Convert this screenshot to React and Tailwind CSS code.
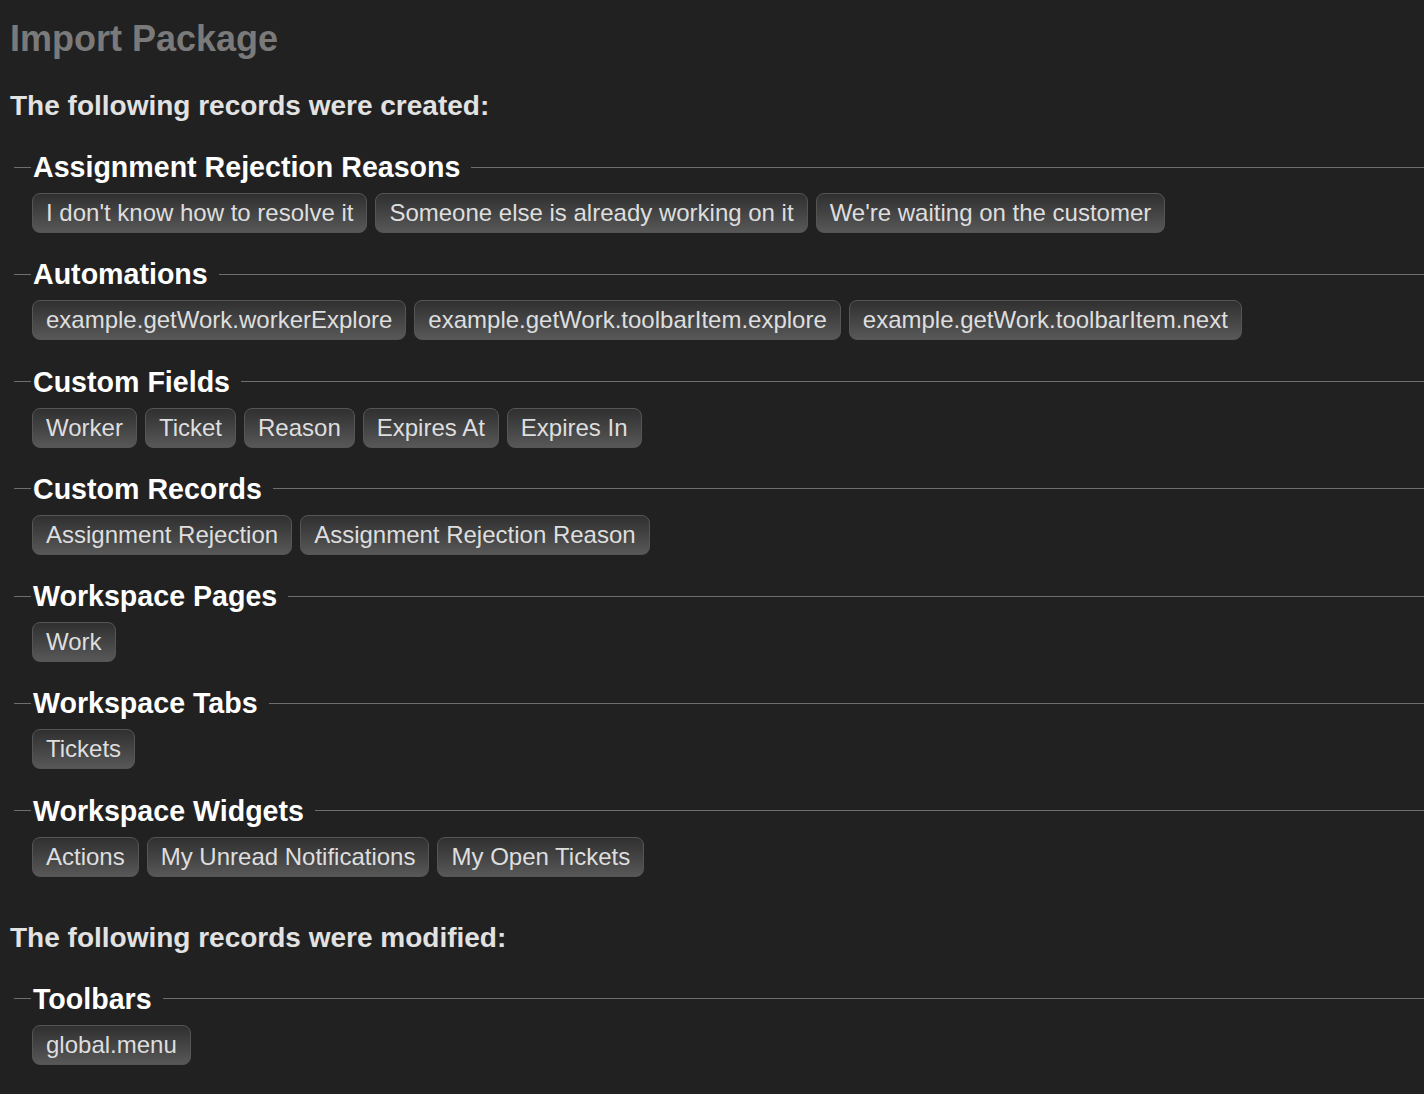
import React from "react";

const created = [
  { title: "Assignment Rejection Reasons", items: ["I don't know how to resolve it", "Someone else is already working on it", "We're waiting on the customer"] },
  { title: "Automations", items: ["example.getWork.workerExplore", "example.getWork.toolbarItem.explore", "example.getWork.toolbarItem.next"] },
  { title: "Custom Fields", items: ["Worker", "Ticket", "Reason", "Expires At", "Expires In"] },
  { title: "Custom Records", items: ["Assignment Rejection", "Assignment Rejection Reason"] },
  { title: "Workspace Pages", items: ["Work"] },
  { title: "Workspace Tabs", items: ["Tickets"] },
  { title: "Workspace Widgets", items: ["Actions", "My Unread Notifications", "My Open Tickets"] },
];

const modified = [{ title: "Toolbars", items: ["global.menu"] }];

function Section({ title, items, last }) {
  return (
    <div className={last ? "" : "mb-[27.3px]"}>
      <div className="flex items-center ml-[14px]">
        <div className="w-[17px] h-px bg-[#6e6e6e]" />
        <div className="pl-[2px] pr-[11px] text-[28.6px] leading-[28px] font-bold text-white whitespace-nowrap">
          {title}
        </div>
        <div className="flex-1 h-px bg-[#6e6e6e]" />
      </div>
      <div className="flex flex-wrap gap-[8px] ml-[32px] mt-[12px]">
        {items.map((it) => (
          <div
            key={it}
            className="h-[40px] flex items-center px-[13px] rounded-[8px] border border-[#555555] bg-gradient-to-b from-[#303030] to-[#585858] text-[24px] text-[#dedede] whitespace-nowrap"
          >
            {it}
          </div>
        ))}
      </div>
    </div>
  );
}

export default function App() {
  return (
    <div
      className="min-h-[1094px] w-full bg-[#212121] overflow-hidden"
      style={{ fontFamily: '"Liberation Sans", Arial, Helvetica, sans-serif' }}
    >
      <div className="pt-[21px]">
        <h1 className="ml-[10px] text-[36px] leading-[36px] font-bold text-[#7a7a7a]">Import Package</h1>
        <h2 className="ml-[10px] mt-[35px] mb-[33px] text-[28px] leading-[28px] font-bold text-[#e2e2e2]">
          The following records were created:
        </h2>
        {created.map((s, i) => (
          <Section key={s.title} {...s} last={i === created.length - 1} />
        ))}
        <h2 className="ml-[10px] mt-[47px] mb-[33px] text-[28px] leading-[28px] font-bold text-[#e2e2e2]">
          The following records were modified:
        </h2>
        {modified.map((s) => (
          <Section key={s.title} {...s} last />
        ))}
      </div>
    </div>
  );
}
